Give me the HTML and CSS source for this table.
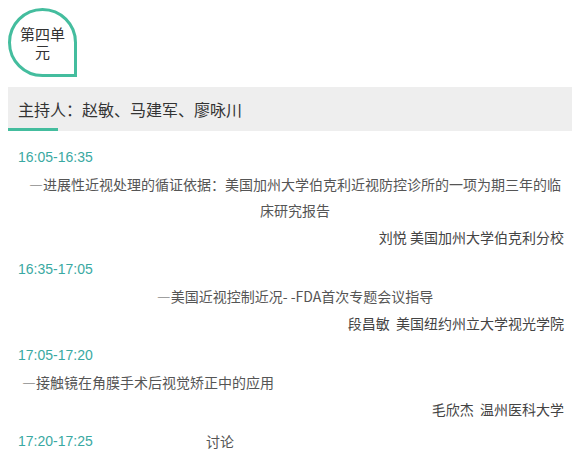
FILE: index.html
```html
<!DOCTYPE html>
<html lang="zh-CN">
<head>
  <meta charset="UTF-8" />
  <meta name="viewport" content="width=device-width, initial-scale=1.0"/>
  <title>第四单元</title>
  <link rel="stylesheet" href="styles.css">
</head>
<body>
  <div class="unit-badge">第四单元</div>

  <div class="host-bar">主持人：赵敏、马建军、廖咏川</div>

  <div class="schedule">
    <div class="session">
      <p class="time">16:05-16:35</p>
      <p class="topic">—进展性近视处理的循证依据：美国加州大学伯克利近视防控诊所的一项为期三年的临床研究报告</p>
      <p class="speaker">刘悦 美国加州大学伯克利分校</p>
    </div>

    <div class="session">
      <p class="time">16:35-17:05</p>
      <p class="topic">—美国近视控制近况- -FDA首次专题会议指导</p>
      <p class="speaker">段昌敏&nbsp; 美国纽约州立大学视光学院</p>
    </div>

    <div class="session">
      <p class="time">17:05-17:20</p>
      <p class="topic topic-left">—接触镜在角膜手术后视觉矫正中的应用</p>
      <p class="speaker">毛欣杰&nbsp; 温州医科大学</p>
    </div>

    <div class="session session-row">
      <span class="time time-col">17:20-17:25</span>
      <span class="topic-inline">讨论</span>
    </div>
  </div>
</body>
</html>
```

FILE: styles.css
```css
:root {
  --color-teal: #44bd9e;
  --color-time: #3aa9a2;
  --color-text: #444;
  --color-bar: #eeeeee;
}

body {
  margin: 8px;
  font-family: 'Noto Sans CJK SC', 'Liberation Sans', sans-serif;
  color: var(--color-text);
  background: #fff;
}

p {
  margin: 0;
}

.unit-badge {
  box-sizing: border-box;
  width: 69px;
  height: 69px;
  padding: 0 8px;
  border: 3px solid var(--color-teal);
  border-radius: 50% 50% 0 50%;
  display: flex;
  align-items: center;
  justify-content: center;
  text-align: center;
  font-size: 15px;
  line-height: 18px;
  color: #333;
}

.host-bar {
  position: relative;
  margin-top: 10px;
  height: 44px;
  padding-left: 10px;
  display: flex;
  align-items: center;
  background: var(--color-bar);
  font-size: 16px;
  color: #333;
}

.host-bar::after {
  content: "";
  position: absolute;
  left: 0;
  bottom: 0;
  width: 50px;
  height: 3px;
  background: var(--color-teal);
}

.schedule {
  margin-top: 12px;
  padding-left: 10px;
}

.session + .session {
  margin-top: 4px;
}

.time {
  font-family: 'Liberation Sans', sans-serif;
  font-size: 14px;
  line-height: 28px;
  color: var(--color-time);
}

.topic {
  padding: 0 5px;
  font-size: 14px;
  line-height: 26px;
  text-align: center;
  color: #555;
}

.topic-left {
  text-align: left;
  padding-left: 4px;
}

.speaker {
  font-size: 14px;
  line-height: 28px;
  text-align: right;
  padding-right: 8px;
  white-space: pre;
}

.session-row {
  display: flex;
  align-items: center;
}

.time-col {
  width: 188px;
}

.topic-inline {
  font-size: 14px;
  line-height: 28px;
  color: #555;
}
```
